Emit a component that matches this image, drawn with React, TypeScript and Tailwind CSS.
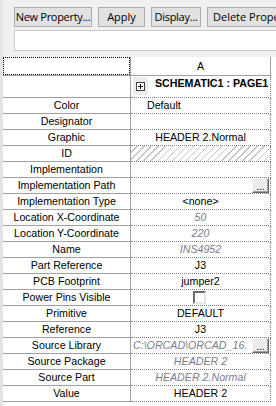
import React from "react";

type Kind = "center" | "left" | "muted" | "hatch" | "browse" | "check" | "path" | "empty";

const rows: { label: string; value?: string; kind: Kind }[] = [
  { label: "Color", value: "Default", kind: "left" },
  { label: "Designator", kind: "empty" },
  { label: "Graphic", value: "HEADER 2.Normal", kind: "center" },
  { label: "ID", kind: "hatch" },
  { label: "Implementation", kind: "empty" },
  { label: "Implementation Path", kind: "browse" },
  { label: "Implementation Type", value: "<none>", kind: "center" },
  { label: "Location X-Coordinate", value: "50", kind: "muted" },
  { label: "Location Y-Coordinate", value: "220", kind: "muted" },
  { label: "Name", value: "INS4952", kind: "muted" },
  { label: "Part Reference", value: "J3", kind: "center" },
  { label: "PCB Footprint", value: "jumper2", kind: "center" },
  { label: "Power Pins Visible", kind: "check" },
  { label: "Primitive", value: "DEFAULT", kind: "center" },
  { label: "Reference", value: "J3", kind: "center" },
  { label: "Source Library", value: "C:\\ORCAD\\ORCAD_16.", kind: "path" },
  { label: "Source Package", value: "HEADER 2", kind: "muted" },
  { label: "Source Part", value: "HEADER 2.Normal", kind: "muted" },
  { label: "Value", value: "HEADER 2", kind: "center" },
];

function BrowseButton() {
  return (
    <div className="flex h-[15px] w-[17px] shrink-0 items-end justify-center border border-t-white border-l-white border-r-[#696969] border-b-[#696969] bg-[#ececec] text-[10px] leading-[10px] text-black shadow-[inset_-1px_-1px_0_#a0a0a0]">
      ...
    </div>
  );
}

function ValueCell({ kind, value }: { kind: Kind; value?: string }) {
  switch (kind) {
    case "left":
      return <div className="pl-[16px] text-black">{value}</div>;
    case "center":
      return <div className="text-center text-black">{value}</div>;
    case "muted":
      return <div className="text-center italic text-[#7c7c8c]">{value}</div>;
    case "hatch":
      return (
        <div className="h-full w-full bg-[repeating-linear-gradient(135deg,transparent_0px,transparent_4px,#c4c4c4_4px,#c4c4c4_5px)]" />
      );
    case "browse":
      return (
        <div className="flex h-full justify-end pr-[1px]">
          <BrowseButton />
        </div>
      );
    case "path":
      return (
        <div className="flex h-full items-center pr-[1px]">
          <div className="flex-1 overflow-hidden whitespace-nowrap pl-[2px] italic text-[#7c7c8c]">{value}</div>
          <BrowseButton />
        </div>
      );
    case "check":
      return (
        <div className="flex h-full items-center justify-center pr-[2px]">
          <div className="h-[13px] w-[13px] border-2 border-t-[#6b6b6b] border-l-[#6b6b6b] border-r-[#e6e6e6] border-b-[#e6e6e6] bg-white" />
        </div>
      );
    default:
      return null;
  }
}

export default function App() {
  return (
    <div className="flex h-[406px] w-[276px] overflow-hidden bg-[#f0f0f0] font-['Liberation_Sans',Arial,sans-serif] text-[10.67px] text-black">
      <div className="w-[3px] shrink-0 bg-[#e3e3e3]" />

      <div className="flex min-w-0 flex-1 flex-col overflow-hidden">
        {/* Toolbar */}
        <div className="flex shrink-0 flex-col pl-[11px] pt-[7px]">
          <div className="flex h-[20px] gap-[6px] font-['Open_Sans',sans-serif] text-[11px]">
            <button className="w-[78px] shrink-0 whitespace-nowrap border border-[#adadad] bg-[#e1e1e1] leading-[18px] tracking-[-0.3px]">
              New Property...
            </button>
            <button className="w-[47px] shrink-0 border border-[#adadad] bg-[#e1e1e1] leading-[18px]">
              Apply
            </button>
            <button className="w-[50px] shrink-0 whitespace-nowrap border border-[#adadad] bg-[#e1e1e1] leading-[18px] tracking-[-0.3px]">
              Display...
            </button>
            <button className="w-[90px] shrink-0 whitespace-nowrap border border-[#adadad] bg-[#e1e1e1] pl-[5px] text-left leading-[18px]">
              Delete Property
            </button>
          </div>
          <div className="mt-[3px] h-[21px] w-[300px] border border-[#c8c8c8] bg-white" />
        </div>

        {/* Property grid */}
        <div className="mt-[6px] flex-1 bg-white">
          <div className="flex h-[19px]">
            <div className="w-[128px] shrink-0 border-r border-b border-[#a0a0a0]">
              <div className="h-full w-full border border-dotted border-black" />
            </div>
            <div className="w-[140px] shrink-0 border-r border-b border-[#a0a0a0] text-center leading-[18px]">A</div>
          </div>

          <div className="flex h-[22px]">
            <div className="w-[128px] shrink-0 border-r border-b border-[#a0a0a0]" />
            <div className="flex w-[140px] shrink-0 overflow-hidden border-r border-b border-dotted border-[#7f7f9f] pl-[2px] pt-[1px]">
              <div className="flex h-[18px] w-[15px] shrink-0 items-center justify-center bg-[#ececec]">
                <div className="flex h-[9px] w-[9px] items-center justify-center border border-[#404040] bg-white text-[9px] leading-[7px]">
                  <svg width="5" height="5" viewBox="0 0 5 5">
                    <path d="M0 2.5H5M2.5 0V5" stroke="#000" strokeWidth="1" />
                  </svg>
                </div>
              </div>
              <div className="ml-[7px] whitespace-nowrap font-bold leading-[13px]">SCHEMATIC1 : PAGE1</div>
            </div>
          </div>

          {rows.map((row) => (
            <div key={row.label} className="flex h-[16px] leading-[15px]">
              <div className="w-[128px] shrink-0 whitespace-nowrap border-r border-b border-[#a0a0a0] text-center">
                {row.label}
              </div>
              <div className="w-[140px] shrink-0 overflow-hidden border-r border-b border-dotted border-[#808080]">
                <ValueCell kind={row.kind} value={row.value} />
              </div>
            </div>
          ))}
        </div>
      </div>
    </div>
  );
}
